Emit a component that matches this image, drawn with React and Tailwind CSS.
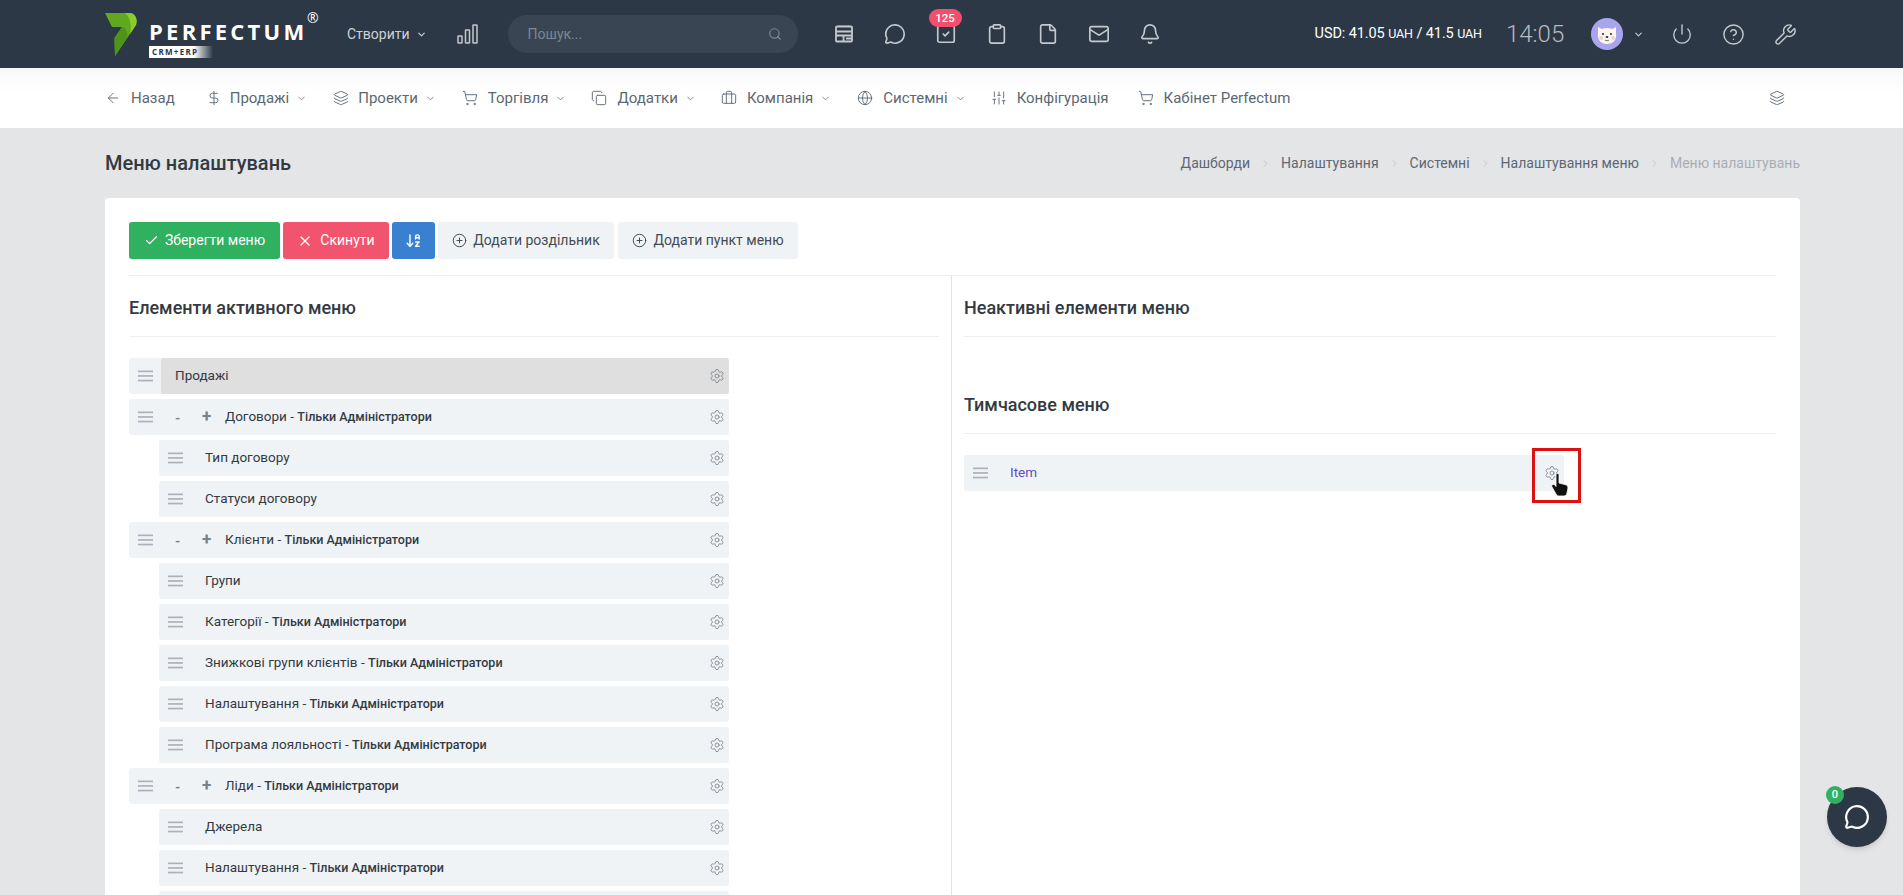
import React from "react";
import {
  ArrowLeft, DollarSign, Layers, ShoppingCart, Copy, Briefcase, Globe, SlidersVertical, ChevronDown, ChevronRight,
  Search, MessageCircle, SquareCheck, Clipboard, File, Mail, Bell, Power, CircleHelp, Wrench, Settings,
  Check, X, CirclePlus, ArrowDownAZ,
} from "lucide-react";

function Logo() {
  return (
    <div className="flex items-start w-[215px] h-[44px] shrink-0">
      <svg width="32" height="43" viewBox="0 0 32 43" className="shrink-0">
        <path d="M0 0H25C30 0 33 6 31 12L10 43L9.5 25L17 14H7Z" fill="#5fa81f" />
        <path d="M20 0H25C30 0 33 6 31 12L25 21C27 12 25 4 20 0Z" fill="#8ccb2e" />
        <path d="M17 14L9.5 25L10 43L22 25C23 20 21 15 17 14Z" fill="#4f9418" />
      </svg>
      <div className="ml-[12px] flex flex-col relative">
        <div className="font-['Open_Sans'] font-bold text-[22px] leading-[22px] tracking-[3.25px] text-white mt-[7px] whitespace-nowrap">PERFECTUM</div>
        <div className="mt-[4px] w-[64px] h-[12px] bg-gradient-to-r from-white from-70% to-transparent text-[#2c3745] font-['Open_Sans'] font-bold text-[8px] leading-[12px] tracking-[1.3px] pl-[3px]">CRM+ERP</div>
        <span className="absolute left-[158px] -top-[2px] text-white text-[14px] leading-[14px] font-['Open_Sans']">®</span>
      </div>
    </div>
  );
}

function BarsIcon() {
  return (
    <svg width="21" height="20" viewBox="0 0 21 20" fill="none" stroke="#c4c9ce" strokeWidth="1.5">
      <rect x="1" y="12" width="4" height="7" rx="0.5" />
      <rect x="8.5" y="6" width="4" height="13" rx="0.5" />
      <rect x="16" y="1" width="4" height="18" rx="0.5" />
    </svg>
  );
}

function TableIcon() {
  return (
    <svg width="20" height="20" viewBox="0 0 20 20" fill="none" stroke="#c4c9ce" strokeWidth="1.8">
      <rect x="2" y="2.5" width="16" height="15" rx="1" />
      <path d="M2 7.5H18M2 11.5H18M9.5 11.5V17.5M12 14.5H18" />
      <path d="M5 1.5V3M8 1.5V3M11 1.5V3M14 1.5V3" strokeWidth="1" />
    </svg>
  );
}

function Avatar() {
  return (
    <svg width="32" height="32" viewBox="0 0 32 32" className="shrink-0">
      <circle cx="16" cy="16" r="16" fill="#a9a4ee" />
      <path d="M7 9L11 11C14 9.5 18 9.5 21 11L25 9L25 15C26 22 22 26 16 26C10 26 6 22 7 15Z" fill="#fbf6f0" />
      <circle cx="10" cy="20" r="2" fill="#f6cfd2" />
      <circle cx="22" cy="20" r="2" fill="#f6cfd2" />
      <circle cx="12" cy="16" r="1.1" fill="#333" />
      <circle cx="20" cy="16" r="1.1" fill="#333" />
      <ellipse cx="16" cy="19" rx="1.4" ry="1" fill="#333" />
      <path d="M14 22C15 23 17 23 18 22" stroke="#333" strokeWidth="0.7" fill="none" />
    </svg>
  );
}

function DragIcon() {
  return (
    <svg width="15" height="12" viewBox="0 0 15 12" fill="#adb2b8">
      <rect x="0" y="0.5" width="15" height="1.7" />
      <rect x="0" y="5.1" width="15" height="1.7" />
      <rect x="0" y="9.7" width="15" height="1.7" />
    </svg>
  );
}

function TopBar() {
  const i = "text-[#c4c9ce]";
  return (
    <header className="h-[68px] bg-[#2c3846] flex items-center pl-[105px] shrink-0">
      <div className="mt-[2px]"><Logo /></div>
      <div className="ml-[27px] flex items-center text-[#ced2d6] text-[14px]">
        <span>Створити</span>
        <ChevronDown size={11} strokeWidth={2.5} className="ml-[6px]" />
      </div>
      <div className="ml-[30px]"><BarsIcon /></div>
      <div className="ml-[30px] w-[290px] h-[38px] rounded-full bg-[#3a4553] flex items-center justify-between pl-[20px] pr-[16px] text-[#7d8791] text-[14px]">
        <span>Пошук...</span>
        <Search size={14} className="text-[#7d8791]" />
      </div>
      <div className="ml-[35px] flex items-center gap-[29px]">
        <div className="w-[22px] flex justify-center"><TableIcon /></div>
        <MessageCircle size={22} strokeWidth={1.8} className={i} />
        <div className="relative">
          <SquareCheck size={22} strokeWidth={1.8} className={i} />
          <span className="absolute -top-[14px] -left-[6px] w-[33px] h-[18px] rounded-full bg-[#f0506e] text-white text-[11.5px] leading-[18px] font-medium text-center">125</span>
        </div>
        <Clipboard size={22} strokeWidth={1.8} className={i} />
        <File size={22} strokeWidth={1.8} className={i} />
        <Mail size={22} strokeWidth={1.8} className={i} />
        <Bell size={22} strokeWidth={1.8} className={i} />
      </div>
      <div className="ml-[154px] text-white text-[14.5px] whitespace-nowrap tracking-[-0.1px]">
        USD: 41.05 <span className="text-[12.5px]">UAH</span> / 41.5 <span className="text-[12.5px]">UAH</span>
      </div>
      <div className="ml-[24px] text-[#b5bac0] text-[24px] font-light leading-none">14:05</div>
      <div className="ml-[27px]"><Avatar /></div>
      <ChevronDown size={11} strokeWidth={2.5} className="ml-[10px] text-[#c4c9ce]" />
      <div className="ml-[27px] flex items-center gap-[29px] text-[#c4c9ce]">
        <Power size={22} strokeWidth={1.5} />
        <CircleHelp size={23} strokeWidth={1.5} />
        <Wrench size={23} strokeWidth={1.5} />
      </div>
    </header>
  );
}

function NavItem({ icon: Icon, text, chevron, gap = 10, ml }) {
  return (
    <div className={"flex items-center whitespace-nowrap " + ml}>
      <Icon size={16} strokeWidth={1.4} className="text-[#5d6873] shrink-0" style={{ marginRight: gap }} />
      <span className="text-[15px] leading-[22px] text-[#5d6873]">{text}</span>
      {chevron && <ChevronDown size={11} strokeWidth={1.6} className="ml-[7px] text-[#5d6873]" />}
    </div>
  );
}

function Nav() {
  return (
    <nav className="h-[60px] bg-gradient-to-b from-[#f8f8f9] to-white to-40% flex items-center pl-[105px] pr-[118px] shrink-0">
      <NavItem icon={ArrowLeft} text="Назад" ml="" />
      <NavItem icon={DollarSign} text="Продажі" chevron ml="ml-[31px]" gap={8} />
      <NavItem icon={Layers} text="Проекти" chevron ml="ml-[26px]" gap={9} />
      <NavItem icon={ShoppingCart} text="Торгівля" chevron ml="ml-[26px]" gap={10} />
      <NavItem icon={Copy} text="Додатки" chevron ml="ml-[25px]" gap={10} />
      <NavItem icon={Briefcase} text="Компанія" chevron ml="ml-[25px]" gap={10} />
      <NavItem icon={Globe} text="Системні" chevron ml="ml-[26px]" gap={10} />
      <NavItem icon={SlidersVertical} text="Конфігурація" ml="ml-[25px]" gap={10} />
      <NavItem icon={ShoppingCart} text="Кабінет Perfectum" ml="ml-[29px]" gap={10} />
      <Layers size={16} strokeWidth={1.4} className="ml-auto text-[#5d6873]" />
    </nav>
  );
}

function Breadcrumbs() {
  const items = ["Дашборди", "Налаштування", "Системні", "Налаштування меню"];
  return (
    <div className="flex items-center text-[14px] text-[#5d6873]">
      {items.map((t) => (
        <React.Fragment key={t}>
          <span>{t}</span>
          <ChevronRight size={11} strokeWidth={1.4} className="mx-[10px] text-[#b4b9be]" />
        </React.Fragment>
      ))}
      <span className="text-[#a9aeb3]">Меню налаштувань</span>
    </div>
  );
}

function Btn({ className, children }) {
  return (
    <div className={"h-[37px] flex items-center justify-center rounded-[3px] text-[14px] whitespace-nowrap " + className}>{children}</div>
  );
}

function Row({ child, parent, label, admin, grey, purple }) {
  return (
    <div className={"h-[36px] rounded-[3px] flex items-stretch shrink-0 bg-[#f0f3f6] " + (child ? "ml-[30px]" : "")}>
      <div className="w-[32px] shrink-0 flex items-center justify-center pb-[1px]">
        <DragIcon />
      </div>
      <div className={"flex-1 flex items-center pr-[4px] pl-[14px] pb-[1px] rounded-r-[3px] text-[13.5px] text-[#333a42] " + (grey ? "bg-[#dfdfdf] rounded-l-[3px]" : "")}>
        {parent && (
          <>
            <span className="w-[7px] font-bold text-[#7b8188] mt-[4px] leading-none">-</span>
            <span className="ml-[20px] w-[11px] font-bold text-[17px] leading-none text-[#7b8188]">+</span>
            <span className="w-[12px]" />
          </>
        )}
        <span className={"whitespace-nowrap " + (purple ? "text-[#5a4fc0]" : "")}>
          {label}
          {admin && <> - <b className="font-medium text-[12.5px]">Тільки Адміністратори</b></>}
        </span>
        <Settings size={16} strokeWidth={1.3} className="ml-auto text-[#7f858b]" />
      </div>
    </div>
  );
}

function Heading({ children }) {
  return (
    <div className="h-[61px] pt-[2px] flex items-center border-b border-[#eceef0] text-[18px] font-medium text-[#333a42] shrink-0">{children}</div>
  );
}

function Hand() {
  return (
    <svg width="20" height="26" viewBox="0 0 20 26" className="absolute left-[15px] top-[21px]">
      <path d="M6 3C6 1 9 1 9 3V11L15 12.5C17 13 18 14 18 16L17 21C16.5 23 15.5 24 14 24H9C7.5 24 7 23.5 6 22L2 15C1 13 3 11.5 5 13L6 14.5Z" fill="#111" stroke="#fff" strokeWidth="0.8" />
    </svg>
  );
}

export default function App() {
  const rows = [
    { label: "Продажі", grey: true },
    { label: "Договори", parent: true, admin: true },
    { label: "Тип договору", child: true },
    { label: "Статуси договору", child: true },
    { label: "Клієнти", parent: true, admin: true },
    { label: "Групи", child: true },
    { label: "Категорії", child: true, admin: true },
    { label: "Знижкові групи клієнтів", child: true, admin: true },
    { label: "Налаштування", child: true, admin: true },
    { label: "Програма лояльності", child: true, admin: true },
    { label: "Ліди", parent: true, admin: true },
    { label: "Джерела", child: true },
    { label: "Налаштування", child: true, admin: true },
    { label: "", child: true },
  ];
  return (
    <div className="h-[895px] overflow-hidden bg-[#e3e5e7] flex flex-col font-['Roboto',sans-serif] relative">
      <TopBar />
      <Nav />
      <div className="h-[70px] pl-[105px] pr-[103px] flex items-center justify-between shrink-0">
        <h1 className="text-[20px] font-medium text-[#333a42]">Меню налаштувань</h1>
        <Breadcrumbs />
      </div>
      <main className="ml-[105px] mr-[103px] flex-1 min-h-0 bg-white rounded-t-[4px] px-[24px] pt-[24px] flex flex-col">
        <div className="flex items-center pb-[16px] border-b border-[#eceef0] shrink-0">
          <Btn className="w-[151px] bg-[#2fb160] text-white gap-[6px]"><Check size={15} strokeWidth={2} />Зберегти меню</Btn>
          <Btn className="ml-[3px] w-[106px] bg-[#f2536d] text-white gap-[7px]"><X size={16} strokeWidth={1.8} />Скинути</Btn>
          <Btn className="ml-[3px] w-[43px] bg-[#3a80d0] text-white"><ArrowDownAZ size={17} strokeWidth={2} /></Btn>
          <Btn className="ml-[3px] w-[176px] bg-[#f0f3f6] text-[#444b53] gap-[6px]"><CirclePlus size={15} strokeWidth={1.6} />Додати роздільник</Btn>
          <Btn className="ml-[4px] w-[180px] bg-[#f0f3f6] text-[#444b53] gap-[6px]"><CirclePlus size={15} strokeWidth={1.6} />Додати пункт меню</Btn>
        </div>
        <div className="flex-1 min-h-0 flex">
          <section className="w-[823px] shrink-0 border-r border-[#dfe1e3] pr-[12px] flex flex-col min-h-0">
            <Heading>Елементи активного меню</Heading>
            <div className="mt-[21px] w-[600px] flex flex-col gap-[5px]">
              {rows.map((r, idx) => <Row key={idx} {...r} />)}
            </div>
          </section>
          <section className="flex-1 pl-[12px] flex flex-col">
            <Heading>Неактивні елементи меню</Heading>
            <div className="mt-[36px]"><Heading>Тимчасове меню</Heading></div>
            <div className="mt-[21px] w-[600px] relative">
              <Row label="Item" purple />
              <div className="absolute left-[568px] -top-[7px] w-[49px] h-[55px] border-[3px] border-[#dd1111]"><Hand /></div>
            </div>
          </section>
        </div>
      </main>
      <div className="absolute left-[1827px] top-[787px] w-[60px] h-[60px] rounded-full bg-[#2c3846] flex items-center justify-center shadow-md">
        <MessageCircle size={26} strokeWidth={2} className="text-white" />
        <span className="absolute -left-[1px] -top-[1px] w-[18px] h-[18px] rounded-full bg-[#2fb160] text-white text-[11px] leading-[18px] font-medium text-center">0</span>
      </div>
    </div>
  );
}
